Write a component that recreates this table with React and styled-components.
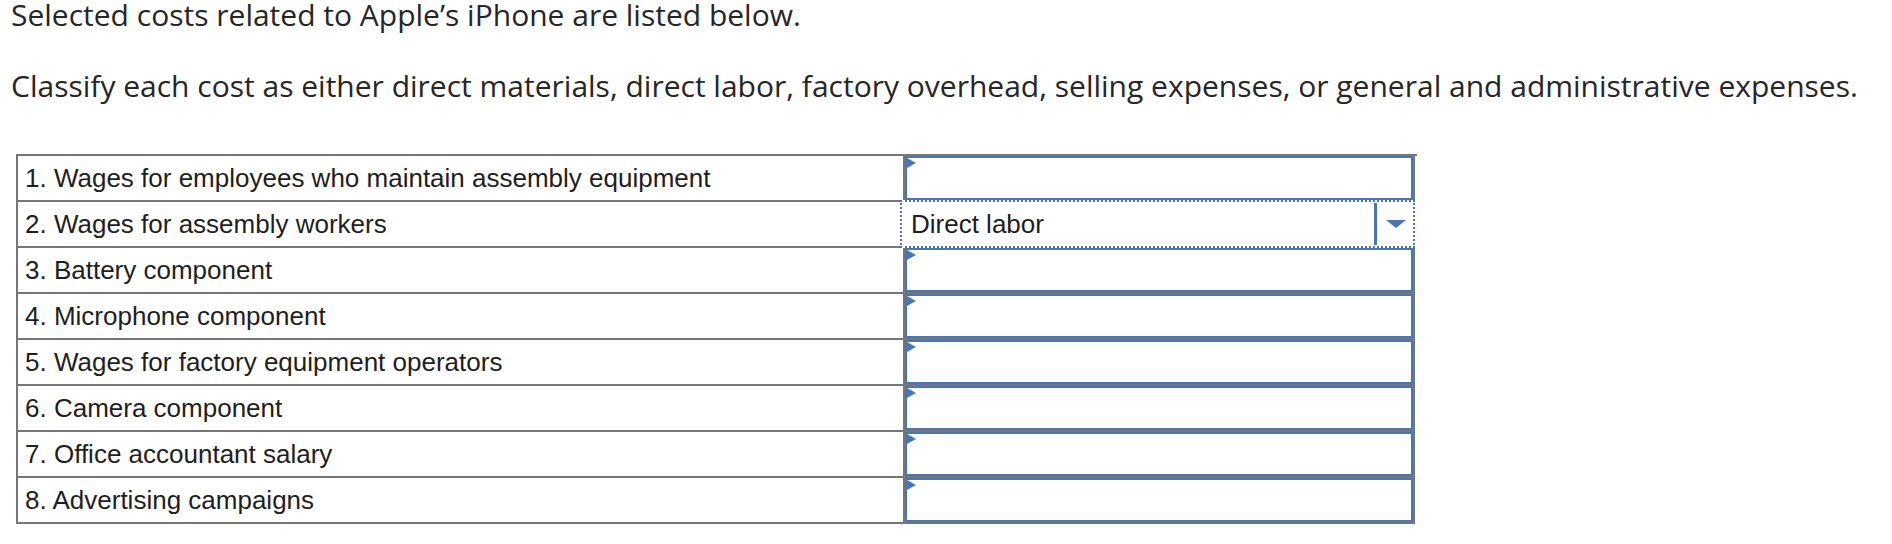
import React from 'react';
import styled, { createGlobalStyle } from 'styled-components';

const GlobalStyle = createGlobalStyle`
  body {
    margin: 0;
    background: #fff;
  }
`;

const BLUE = '#4a76b6';
const GRAY = '#767676';

const Page = styled.main`
  padding-bottom: 20px;
`;

const Prompt = styled.p`
  margin: 0;
  padding-left: 11px;
  font-family: "Open Sans", Lato, sans-serif;
  font-size: 30px;
  line-height: 35px;
  color: #262626;
  white-space: nowrap;

  &:first-child {
    line-height: 29px;
  }

  & + & {
    margin-top: 39px;
  }
`;

const Sheet = styled.div`
  margin: 51px 0 0 16px;
  width: 1399px;
  border-top: 2px solid ${GRAY};
  border-left: 2px solid ${GRAY};
`;

const Row = styled.div`
  display: grid;
  grid-template-columns: 887px 510px;
  height: 46px;
`;

const Label = styled.div`
  display: flex;
  align-items: center;
  padding-left: 7px;
  border-right: 2px solid ${GRAY};
  border-bottom: 2px solid ${GRAY};
  font-family: "Liberation Sans", Arial, sans-serif;
  font-size: 26px;
  color: #1e1e1e;
`;

const Answer = styled.div`
  display: flex;
  border-right: 2px solid ${GRAY};
  border-bottom: 2px solid ${GRAY};
`;

const Blank = styled.div`
  position: relative;
  flex: 1;
  border: 2px solid ${BLUE};
  background: #fff;

  &::before {
    content: '';
    position: absolute;
    top: 0;
    left: 0;
    border-left: 9px solid ${BLUE};
    border-top: 5px solid transparent;
    border-bottom: 5px solid transparent;
  }
`;

const Select = styled.div`
  position: relative;
  z-index: 1;
  flex: 1;
  display: flex;
  align-items: stretch;
  margin: -2px -2px -2px -5px;
  border: 2px dotted ${BLUE};
  background: #fff;
  font-family: "Liberation Sans", Arial, sans-serif;
  font-size: 26px;
  color: #1e1e1e;
`;

const Value = styled.span`
  flex: 1;
  display: flex;
  align-items: center;
  padding-left: 9px;
`;

const Toggle = styled.span`
  width: 36px;
  margin: 1px 0;
  display: flex;
  align-items: center;
  justify-content: center;
  border-left: 3px solid ${BLUE};

  &::after {
    content: '';
    border-top: 8px solid ${BLUE};
    border-left: 10px solid transparent;
    border-right: 10px solid transparent;
    margin-left: 2px;
  }
`;

const costs = [
  { label: '1. Wages for employees who maintain assembly equipment' },
  { label: '2. Wages for assembly workers', value: 'Direct labor' },
  { label: '3. Battery component' },
  { label: '4. Microphone component' },
  { label: '5. Wages for factory equipment operators' },
  { label: '6. Camera component' },
  { label: '7. Office accountant salary' },
  { label: '8. Advertising campaigns' },
];

export default function App() {
  return (
    <Page>
      <GlobalStyle />
      <Prompt>Selected costs related to Apple’s iPhone are listed below.</Prompt>
      <Prompt>
        Classify each cost as either direct materials, direct labor, factory overhead, selling
        expenses, or general and administrative expenses.
      </Prompt>
      <Sheet>
        {costs.map((cost) => (
          <Row key={cost.label}>
            <Label>{cost.label}</Label>
            <Answer>
              {cost.value ? (
                <Select>
                  <Value>{cost.value}</Value>
                  <Toggle />
                </Select>
              ) : (
                <Blank />
              )}
            </Answer>
          </Row>
        ))}
      </Sheet>
    </Page>
  );
}
